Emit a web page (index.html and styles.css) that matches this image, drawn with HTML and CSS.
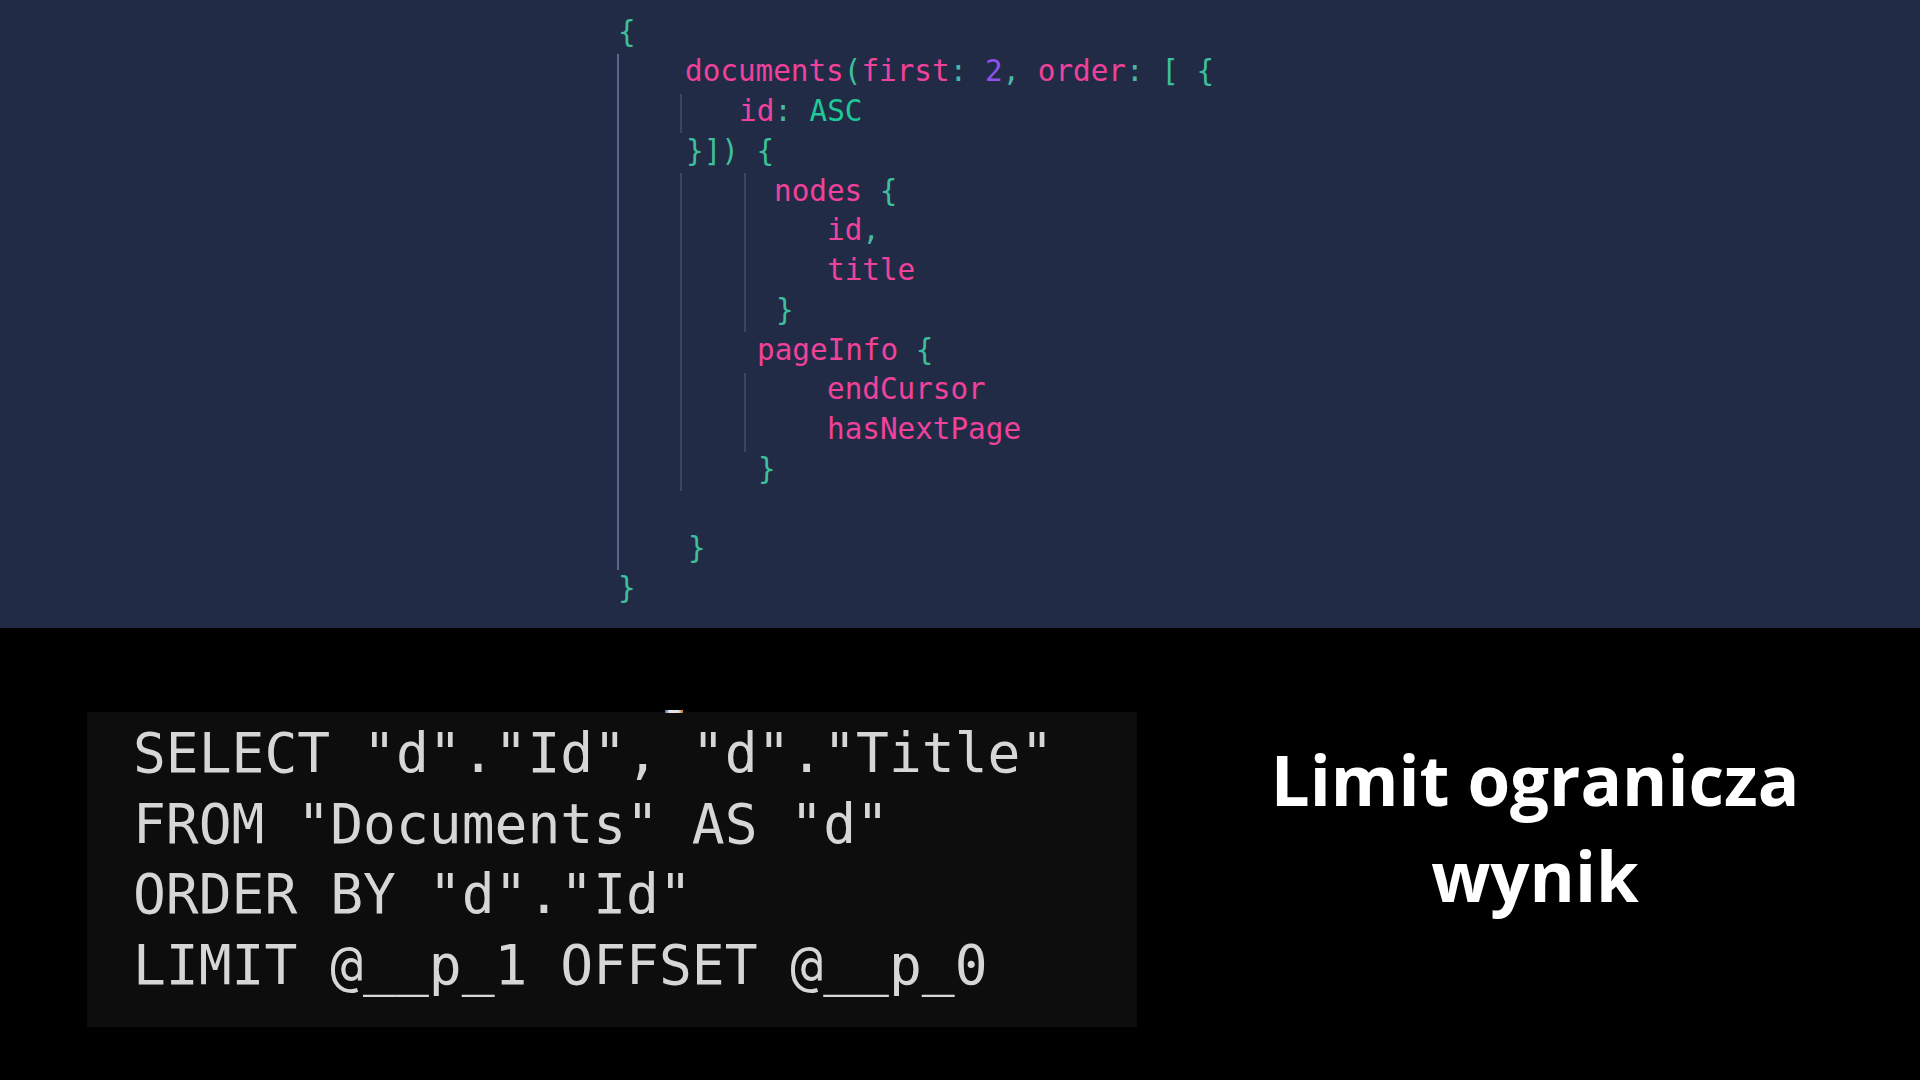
FILE: index.html
```html
<!DOCTYPE html>
<html lang="pl">
<head>
<meta charset="utf-8">
<title>Limit ogranicza wynik</title>
<link rel="stylesheet" href="styles.css">
</head>
<body>
<section class="top">
  <div class="code">
    <span class="guide g1"></span>
    <span class="guide g2a"></span>
    <span class="guide g2b"></span>
    <span class="guide g3a"></span>
    <span class="guide g3b"></span>
    <div class="ln"><span class="p">{</span></div>
    <div class="ln l-doc"><span class="k">documents</span><span class="p">(</span><span class="k">first</span><span class="c">:</span> <span class="n">2</span><span class="c">,</span> <span class="k">order</span><span class="c">:</span> <span class="p">[ {</span></div>
    <div class="ln l-id"><span class="k">id</span><span class="c">:</span> <span class="e">ASC</span></div>
    <div class="ln l-close1"><span class="p">}]) {</span></div>
    <div class="ln l-nodes"><span class="k">nodes</span> <span class="p">{</span></div>
    <div class="ln l-field"><span class="k">id</span><span class="c">,</span></div>
    <div class="ln l-field"><span class="k">title</span></div>
    <div class="ln l-nclose"><span class="p">}</span></div>
    <div class="ln l-page"><span class="k">pageInfo</span> <span class="p">{</span></div>
    <div class="ln l-field"><span class="k">endCursor</span></div>
    <div class="ln l-field"><span class="k">hasNextPage</span></div>
    <div class="ln l-pclose"><span class="p">}</span></div>
    <div class="ln">&nbsp;</div>
    <div class="ln l-dclose"><span class="p">}</span></div>
    <div class="ln l-end"><span class="p">}</span></div>
  </div>
</section>
<section class="bottom">
  <div class="sqlbox">
    <span class="artifact"></span>
    <div class="sql">SELECT "d"."Id", "d"."Title"</div>
    <div class="sql">FROM "Documents" AS "d"</div>
    <div class="sql">ORDER BY "d"."Id"</div>
    <div class="sql">LIMIT @__p_1 OFFSET @__p_0</div>
  </div>
  <div class="title">
    <h1>Limit ogranicza<br>wynik</h1>
  </div>
</section>
</body>
</html>
```
FILE: styles.css
```css
* { box-sizing: border-box; }
html, body { margin: 0; padding: 0; }
body {
  width: 1920px;
  height: 1080px;
  background: #000;
  overflow: hidden;
}

.top {
  height: 628px;
  background: #222b45;
  display: flex;
  align-items: flex-start;
}

.code {
  position: relative;
  margin-left: 618px;
  padding-top: 12.5px;
  font-family: "DejaVu Sans Mono", monospace;
  font-size: 29.3px;
  line-height: 39.75px;
  color: #ee3f98;
}

.ln { height: 39.75px; white-space: pre; }
.l-doc { margin-left: 67px; }
.l-id { margin-left: 121px; }
.l-close1 { margin-left: 68px; }
.l-nodes { margin-left: 156px; }
.l-field { margin-left: 209px; }
.l-nclose { margin-left: 158px; }
.l-page { margin-left: 139px; }
.l-pclose { margin-left: 140px; }
.l-dclose { margin-left: 70px; }
.l-end { margin-left: 0; }

.k { color: #f0429b; }
.p { color: #3dbf9c; }
.c { color: #4ab7a4; }
.n { color: #8f52ee; }
.e { color: #1fc896; }

.guide {
  position: absolute;
  width: 2px;
  background: #3a4564;
}
.g1 { left: -1px; top: 54px; height: 516px; background: #5d6891; }
.g2a { left: 62px; top: 94px; height: 39px; }
.g2b { left: 62px; top: 173px; height: 318px; }
.g3a { left: 126px; top: 173px; height: 159px; }
.g3b { left: 126px; top: 373px; height: 79px; }

.bottom {
  height: 452px;
  display: flex;
  align-items: flex-start;
  padding-left: 87px;
}

.sqlbox {
  position: relative;
  flex: none;
  width: 1050px;
  margin-top: 84px;
  padding: 6px 0 27px 46px;
  background: #0d0d0d;
}

.artifact {
  position: absolute;
  left: 578px;
  top: -2px;
  width: 18px;
  height: 3px;
  background: linear-gradient(90deg, #3a6db8 0%, #e8e8e8 25%, #e0e0e0 75%, #c0701e 100%);
}

.sql {
  font-family: "DejaVu Sans Mono", monospace;
  font-size: 54.6px;
  line-height: 70.5px;
  color: #d6d6d6;
  white-space: pre;
}

.title {
  flex: 1;
  padding-left: 13px;
  margin-top: 103px;
  text-align: center;
}

.title h1 {
  margin: 0;
  font-family: "Open Sans", sans-serif;
  font-weight: 700;
  font-size: 69px;
  line-height: 96px;
  color: #fff;
}
```
